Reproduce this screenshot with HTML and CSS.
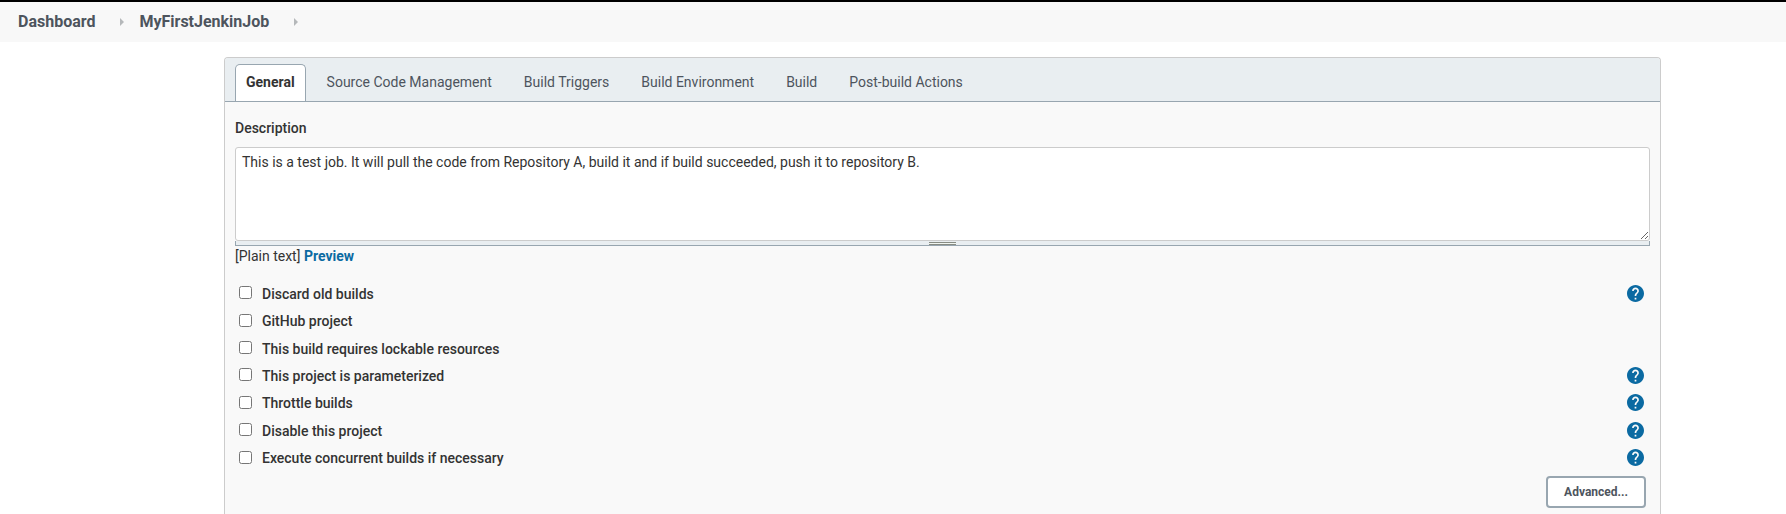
FILE: index.html
```html
<!DOCTYPE html>
<html lang="en">
<head>
<meta charset="utf-8">
<title>MyFirstJenkinJob Config</title>
<link rel="stylesheet" href="styles.css">
</head>
<body>
<svg class="sprite" aria-hidden="true">
  <symbol id="help" viewBox="2 2 20 20"><path d="M12 2C6.48 2 2 6.48 2 12s4.480 10 10 10 10-4.480 10-10S17.520 2 12 2zm1 17h-2v-2h2v2zm2.070-7.750l-.9.920C13.450 12.900 13 13.500 13 15h-2v-.5c0-1.100.45-2.100 1.170-2.830l1.240-1.260c.37-.36.590-.86.590-1.410 0-1.100-.9-2-2-2s-2 .9-2 2H8c0-2.210 1.790-4 4-4s4 1.790 4 4c0 .88-.36 1.680-.93 2.250z"/></symbol>
  <symbol id="arrow" viewBox="0 0 4 8"><path d="M0 0L4 4L0 8z"/></symbol>
</svg>
<nav class="breadcrumbs" aria-label="Breadcrumb">
  <a href="#">Dashboard</a>
  <svg class="arrow"><use href="#arrow"/></svg>
  <a href="#">MyFirstJenkinJob</a>
  <svg class="arrow"><use href="#arrow"/></svg>
</nav>
<main class="panel">
  <nav class="tabs" aria-label="Sections">
    <a class="tab active" href="#">General</a>
    <a class="tab" href="#">Source Code Management</a>
    <a class="tab" href="#">Build Triggers</a>
    <a class="tab" href="#">Build Environment</a>
    <a class="tab" href="#">Build</a>
    <a class="tab" href="#">Post-build Actions</a>
  </nav>
  <form class="config">
    <label class="field-label" for="description">Description</label>
    <textarea class="description" id="description">This is a test job. It will pull the code from Repository A, build it and if build succeeded, push it to repository B.</textarea>
    <div class="handle"><span class="grip"></span></div>
    <div class="format">[Plain text] <a href="#">Preview</a></div>
    <div class="options">
      <div class="option"><input type="checkbox" id="discard"><label for="discard">Discard old builds</label><button class="help" type="button" aria-label="Help"><svg><use href="#help"/></svg></button></div>
      <div class="option"><input type="checkbox" id="github"><label for="github">GitHub project</label></div>
      <div class="option"><input type="checkbox" id="lockable"><label for="lockable">This build requires lockable resources</label></div>
      <div class="option"><input type="checkbox" id="params"><label for="params">This project is parameterized</label><button class="help" type="button" aria-label="Help"><svg><use href="#help"/></svg></button></div>
      <div class="option"><input type="checkbox" id="throttle"><label for="throttle">Throttle builds</label><button class="help" type="button" aria-label="Help"><svg><use href="#help"/></svg></button></div>
      <div class="option"><input type="checkbox" id="disable"><label for="disable">Disable this project</label><button class="help" type="button" aria-label="Help"><svg><use href="#help"/></svg></button></div>
      <div class="option"><input type="checkbox" id="concurrent"><label for="concurrent">Execute concurrent builds if necessary</label><button class="help" type="button" aria-label="Help"><svg><use href="#help"/></svg></button></div>
    </div>
    <div class="actions"><button class="advanced" type="button">Advanced...</button></div>
  </form>
</main>
</body>
</html>
```
FILE: styles.css
```css
* { box-sizing: border-box; }

body {
  margin: 0;
  min-height: 100vh;
  display: flex;
  flex-direction: column;
  background: #fff;
  color: #333;
  font: 14px/20px Roboto, "Noto Sans", sans-serif;
}

a { text-decoration: none; }

.sprite { display: none; }

.breadcrumbs {
  display: flex;
  align-items: center;
  padding: 10px 18px;
  border-top: 2px solid #000;
  background: #f8f8f8;
  font-size: 16px;
  font-weight: 700;
}

.breadcrumbs a { color: #4d545d; }

.arrow {
  width: 4px;
  height: 8px;
  margin: 0 15px 0 25px;
  fill: #b5b8ba;
}

.panel {
  flex: 1;
  margin: 15px 125px 0 224px;
  border: 1px solid #ccc;
  border-bottom: 0;
  border-radius: 4px 4px 0 0;
  background: #f9f9f9;
}

.tabs {
  display: flex;
  gap: 10px;
  padding: 6px 10px 0;
  border-bottom: 1px solid #98a6b0;
  border-radius: 3px 3px 0 0;
  background: #e9eef1;
}

.tab {
  padding: 7px 10px 9px;
  border: 1px solid transparent;
  border-bottom: 0;
  border-radius: 5px 5px 0 0;
  color: #4d545d;
}

.tab.active {
  border-color: #98a6b0;
  background: #fff;
  color: #333;
  font-weight: 700;
}

.config {
  display: flex;
  flex-direction: column;
  padding: 16px 10px 0;
}

.field-label, .option label { font-weight: 500; }

.field-label { margin-bottom: 9px; }

.description {
  height: 94px;
  padding: 4px 6px;
  border: 1px solid #ccc;
  border-radius: 3px;
  background: #fff;
  color: #333;
  font: inherit;
  resize: vertical;
}

.handle {
  display: flex;
  justify-content: center;
  height: 5px;
  border: 1px solid #98a6b0;
  border-top: 0;
  background: #e9eef1;
}

.grip {
  width: 27px;
  height: 3px;
  margin-top: 1px;
  border: solid #888c84;
  border-width: 1px 0;
  background: #f0f5f0;
}

.format a {
  color: #0b6aa2;
  font-weight: 700;
}

.options {
  display: grid;
  grid-auto-rows: 1fr;
  min-height: 192px;
  margin-top: 14px;
}

.option {
  display: flex;
  align-items: center;
  padding: 0 6px 0 4px;
}

.option input {
  width: 13px;
  height: 13px;
  margin: 0 10px 2px 0;
}

.help {
  width: 17px;
  height: 17px;
  margin: 0 0 1px auto;
  padding: 0;
  border: 0;
  background: none;
}

.help svg {
  display: block;
  width: 17px;
  height: 17px;
  fill: #0b6aa2;
}

.actions {
  display: flex;
  justify-content: flex-end;
  padding: 4px 4px 0;
}

.advanced {
  padding: 4px 16px;
  border: 2px solid #98a6b0;
  border-radius: 4px;
  background: #fff;
  color: #4d545d;
  font: 700 12px/20px Roboto, "Noto Sans", sans-serif;
}
```
